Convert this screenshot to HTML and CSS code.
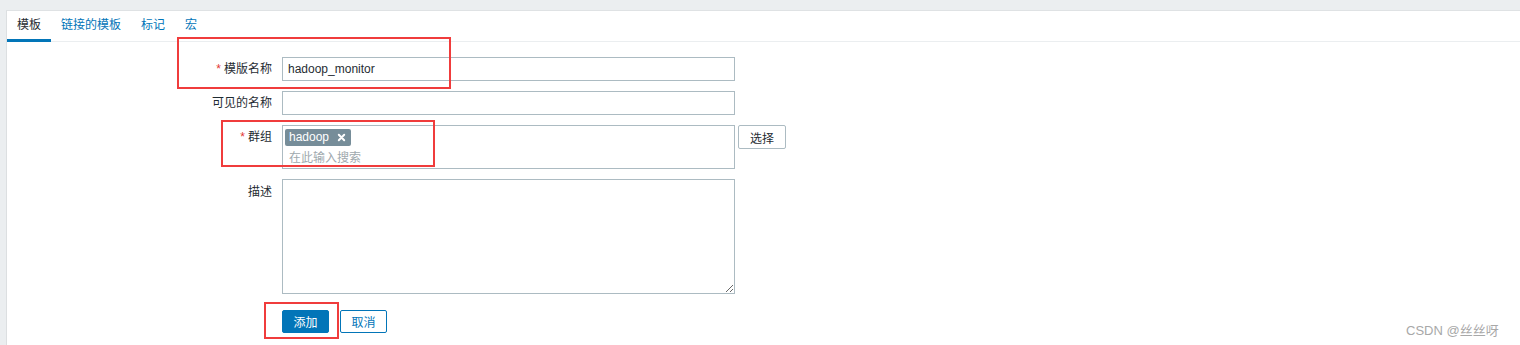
FILE: index.html
```html
<!DOCTYPE html>
<html lang="zh">
<head>
<meta charset="utf-8">
<link rel="stylesheet" href="styles.css">
</head>
<body>
<div class="page">
  <div class="panel">
    <ul class="tabs">
      <li class="tab active">模板</li>
      <li class="tab">链接的模板</li>
      <li class="tab">标记</li>
      <li class="tab">宏</li>
    </ul>
    <form class="form">
      <label class="label"><span class="req">*</span>模版名称</label>
      <input class="field input" type="text" value="hadoop_monitor">
      <span></span>

      <label class="label">可见的名称</label>
      <input class="field input" type="text" value="">
      <span></span>

      <label class="label top"><span class="req">*</span>群组</label>
      <div class="field multi">
        <span class="tag">hadoop<svg class="tag-x" viewBox="0 0 10 10" width="9" height="9"><path d="M2 2 L8 8 M8 2 L2 8" stroke="#fff" stroke-width="2.2" stroke-linecap="round"/></svg></span>
        <span class="placeholder">在此输入搜索</span>
      </div>
      <button type="button" class="btn-alt select">选择</button>

      <label class="label top desc">描述</label>
      <textarea class="field textarea"></textarea>
      <span></span>

      <span></span>
      <div class="actions">
        <button type="button" class="btn-primary">添加</button>
        <button type="button" class="btn-outline">取消</button>
      </div>
      <span></span>
    </form>
  </div>
  <div class="mark mark1"></div>
  <div class="mark mark2"></div>
  <div class="mark mark3"></div>
  <div class="watermark">CSDN @丝丝呀</div>
</div>
</body>
</html>
```

FILE: styles.css
```css
* { box-sizing: border-box; }
html, body { margin: 0; padding: 0; }
body {
  background: #ebeef0;
  font-family: "Liberation Sans", Arial, "Noto Sans CJK SC", sans-serif;
  font-size: 12px;
  color: #1f2c33;
  width: 1520px;
  height: 345px;
  overflow: hidden;
}
.page {
  position: relative;
  padding: 10px 0 0 6px;
  height: 345px;
}
.panel {
  background: #fff;
  border-left: 1px solid #dcdfe1;
  border-top: 1px solid #dfe2e4;
  height: 335px;
}
.tabs {
  list-style: none;
  margin: 0;
  padding: 0;
  display: flex;
  height: 31px;
  border-bottom: 1px solid #ebeef0;
}
.tab {
  padding: 0 10px;
  line-height: 28px;
  color: #0275b8;
  border-bottom: 3px solid transparent;
  height: 31px;
}
.tab.active {
  color: #1f2c33;
  border-bottom-color: #0275b8;
}
.form {
  display: grid;
  grid-template-columns: 265px 453px auto;
  column-gap: 10px;
  row-gap: 10px;
  padding-top: 15px;
  align-items: center;
}
.label {
  text-align: right;
  line-height: 16px;
}
.label.top { align-self: start; padding-top: 4px; }
.label.desc { padding-top: 5px; }
.req { color: #e33734; margin-right: 3px; }
.field {
  border: 1px solid #acbbc2;
  background: #fff;
  width: 453px;
  font-family: inherit;
  font-size: 12px;
  color: #1f2c33;
  outline: none;
}
.input {
  height: 24px;
  padding: 0 5px;
}
.multi {
  height: 44px;
  padding: 2px 2px;
  display: flex;
  flex-direction: column;
  align-items: flex-start;
}
.tag {
  background: #768d99;
  color: #fff;
  border-radius: 2px;
  height: 17px;
  line-height: 17px;
  padding: 0 5px 0 4px;
  display: inline-flex;
  align-items: center;
  gap: 8px;
  margin-top: 1px;
}
.tag-x { display: block; }
.placeholder {
  color: #a0a9ae;
  padding-left: 4px;
  line-height: 20px;
  margin-top: 2px;
}
.select {
  align-self: start;
  justify-self: start;
  margin-left: -7px;
}
.btn-alt {
  height: 24px;
  width: 48px;
  border: 1px solid #acbbc2;
  background: #fff;
  border-radius: 2px;
  font-family: inherit;
  font-size: 12px;
  color: #1f2c33;
  padding: 0;
}
.textarea {
  height: 115px;
  resize: both;
  padding: 4px 5px;
}
.actions {
  display: flex;
  gap: 11px;
  margin-top: 6px;
}
.btn-primary, .btn-outline {
  height: 23px;
  width: 47px;
  border-radius: 2px;
  font-family: inherit;
  font-size: 12px;
  padding: 0;
}
.btn-primary {
  background: #0275b8;
  border: 1px solid #0275b8;
  color: #fff;
}
.btn-outline {
  background: #fff;
  border: 1px solid #0275b8;
  color: #0275b8;
}
.mark {
  position: absolute;
  border: 2px solid #f03c3c;
}
.mark1 { left: 177px; top: 37px; width: 274px; height: 52px; }
.mark2 { left: 221px; top: 120px; width: 214px; height: 47px; }
.mark3 { left: 264px; top: 302px; width: 75px; height: 37px; }
.watermark {
  position: absolute;
  left: 1406px;
  top: 320px;
  font-size: 13px;
  color: #a8a8a8;
  font-family: "Liberation Sans", Arial, "Noto Sans CJK SC", sans-serif;
}
```
